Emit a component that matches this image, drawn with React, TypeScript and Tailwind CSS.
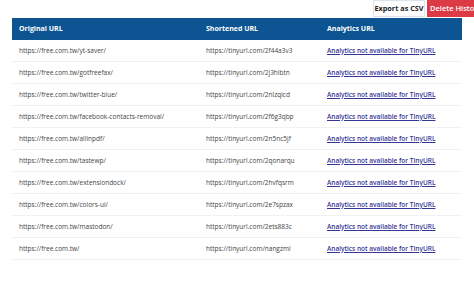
const rows = [
  ['https://free.com.tw/yt-saver/', 'https://tinyurl.com/2f44a3v3'],
  ['https://free.com.tw/gotfreefax/', 'https://tinyurl.com/2j3hlbtn'],
  ['https://free.com.tw/twitter-blue/', 'https://tinyurl.com/2nlzqlcd'],
  ['https://free.com.tw/facebook-contacts-removal/', 'https://tinyurl.com/2f6g3qbp'],
  ['https://free.com.tw/allinpdf/', 'https://tinyurl.com/2n5nc5jf'],
  ['https://free.com.tw/tastewp/', 'https://tinyurl.com/2qonarqu'],
  ['https://free.com.tw/extensiondock/', 'https://tinyurl.com/2hvfqsrm'],
  ['https://free.com.tw/colors-ui/', 'https://tinyurl.com/2e7spzax'],
  ['https://free.com.tw/mastodon/', 'https://tinyurl.com/2ets883c'],
  ['https://free.com.tw/', 'https://tinyurl.com/nangzml'],
];

export default function App() {
  return (
    <div className="w-[474px] h-[300px] bg-white overflow-hidden font-['Open_Sans',sans-serif]">
      <div className="flex justify-end gap-[2px] h-[18px]">
        <button className="w-[52px] h-[17px] bg-white border border-[#dbe4ec] text-[7.3px] font-bold text-[#222] leading-none whitespace-nowrap">
          Export as CSV
        </button>
        <button className="w-[58px] h-[17px] pl-[3px] bg-[#dc3b45] text-white text-[7.5px] font-semibold leading-none whitespace-nowrap text-left -mr-[11px]">
          Delete History
        </button>
      </div>
      <div className="mx-[12px] w-[450px]">
        <div className="grid grid-cols-[187px_121px_1fr] h-[22px] items-center bg-[#0d5592] text-white text-[7px] font-bold">
          <div className="pl-[7px]">Original URL</div>
          <div className="pl-[7px]">Shortened URL</div>
          <div className="pl-[7px]">Analytics URL</div>
        </div>
        {rows.map(([orig, short]) => (
          <div
            key={orig}
            className="grid grid-cols-[187px_121px_1fr] h-[22px] items-center border-b border-[#f1f1f1] text-[6.5px] text-[#444]"
          >
            <div className="pl-[7px] whitespace-nowrap">{orig}</div>
            <div className="pl-[7px] whitespace-nowrap">{short}</div>
            <div className="pl-[7px] whitespace-nowrap">
              <a className="underline font-semibold text-[#363694]">Analytics not available for TinyURL</a>
            </div>
          </div>
        ))}
      </div>
    </div>
  );
}
